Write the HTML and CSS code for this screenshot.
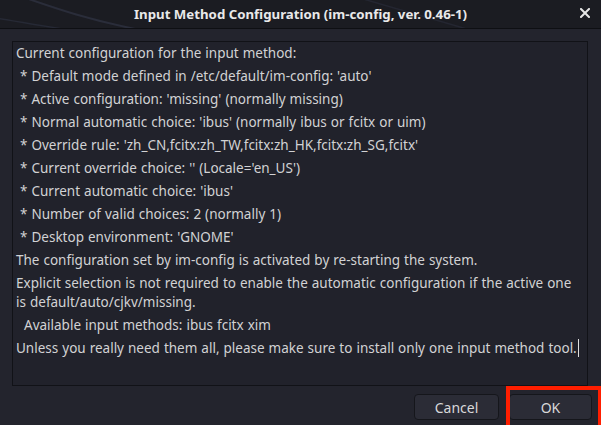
FILE: index.html
```html
<!DOCTYPE html>
<html>
<head>
<meta charset="utf-8">
<link rel="stylesheet" href="styles.css">
</head>
<body>
<div class="window">
  <header class="titlebar">
    <svg class="wallpaper" width="601" height="28" viewBox="0 0 601 28">
      <path d="M20 -4 C 60 10, 90 20, 140 30" stroke="#2a2d3a" stroke-width="2" fill="none"/>
      <path d="M-5 18 C 30 24, 60 28, 90 34" stroke="#262935" stroke-width="1.5" fill="none"/>
      <path d="M360 -2 C 400 10, 430 18, 470 30" stroke="#242631" stroke-width="1.5" fill="none"/>
    </svg>
    <span class="title">Input Method Configuration (im-config, ver. 0.46-1)</span>
    <svg class="close" width="10" height="10" viewBox="0 0 10 10">
      <path d="M1 1 L9 9 M9 1 L1 9" stroke="#e6e6e6" stroke-width="2" stroke-linecap="square"/>
    </svg>
  </header>
  <main class="content">
    <div class="textview">
      <p>Current configuration for the input method:</p>
      <p>&nbsp;* Default mode defined in /etc/default/im-config: 'auto'</p>
      <p>&nbsp;* Active configuration: 'missing' (normally missing)</p>
      <p>&nbsp;* Normal automatic choice: 'ibus' (normally ibus or fcitx or uim)</p>
      <p>&nbsp;* Override rule: 'zh_CN,fcitx:zh_TW,fcitx:zh_HK,fcitx:zh_SG,fcitx'</p>
      <p>&nbsp;* Current override choice: '' (Locale='en_US')</p>
      <p>&nbsp;* Current automatic choice: 'ibus'</p>
      <p>&nbsp;* Number of valid choices: 2 (normally 1)</p>
      <p>&nbsp;* Desktop environment: 'GNOME'</p>
      <p>The configuration set by im-config is activated by re-starting the system.</p>
      <p>Explicit selection is not required to enable the automatic configuration if the active one is default/auto/cjkv/missing.</p>
      <p>&nbsp; Available input methods: ibus fcitx xim</p>
      <p>Unless you really need them all, please make sure to install only one input method tool.<span class="cursor"></span></p>
    </div>
  </main>
  <footer class="actions">
    <button class="btn">Cancel</button>
    <button class="btn ok">OK</button>
    <span class="highlight"></span>
  </footer>
</div>
</body>
</html>
```
FILE: styles.css
```css
html, body {
  margin: 0;
  padding: 0;
  background: #23242d;
}
.window {
  width: 601px;
  height: 425px;
  display: flex;
  flex-direction: column;
  background: #23242d;
  font-family: "Noto Sans", "Open Sans", sans-serif;
  color: #d2d2d4;
  overflow: hidden;
  position: relative;
}
.titlebar {
  position: relative;
  height: 28px;
  flex: none;
  background: #1b1c22;
  border-bottom: 1px solid #0e0f13;
  display: flex;
  align-items: center;
  justify-content: center;
}
.wallpaper {
  position: absolute;
  left: 0;
  top: 0;
}
.title {
  position: relative;
  font-weight: bold;
  font-size: 13.25px;
  color: #e9e9ea;
}
.close {
  position: absolute;
  right: 11px;
  top: 8px;
}
.content {
  flex: none;
  padding: 12px 13px 0 12px;
}
.textview {
  height: 341px;
  border: 1px solid #111217;
  background: #21222b;
  padding: 2px 7px 0 3px;
  font-size: 13.5px;
  line-height: 19px;
  word-spacing: 0.5px;
}
.textview p {
  margin: 0 0 4px 0;
  white-space: pre-wrap;
}
.cursor {
  display: inline-block;
  width: 1px;
  height: 18px;
  background: #e0e0e0;
  vertical-align: -4px;
  margin-left: 1px;
}
.actions {
  position: relative;
  flex: 1;
  display: flex;
  justify-content: flex-end;
  align-items: flex-start;
  gap: 10px;
  padding: 8px 9px 0 0;
}
.btn {
  width: 85px;
  height: 26px;
  background: #2b2c36;
  border: 1px solid #15161b;
  border-radius: 4px;
  color: #d8d8da;
  font-family: "Noto Sans", "Open Sans", sans-serif;
  font-size: 14px;
  padding: 0;
}
.btn.ok {
  width: 83px;
}
.highlight {
  position: absolute;
  left: 506px;
  top: 0;
  width: 88px;
  height: 36px;
  border: 4px solid #ff1e00;
}
```
